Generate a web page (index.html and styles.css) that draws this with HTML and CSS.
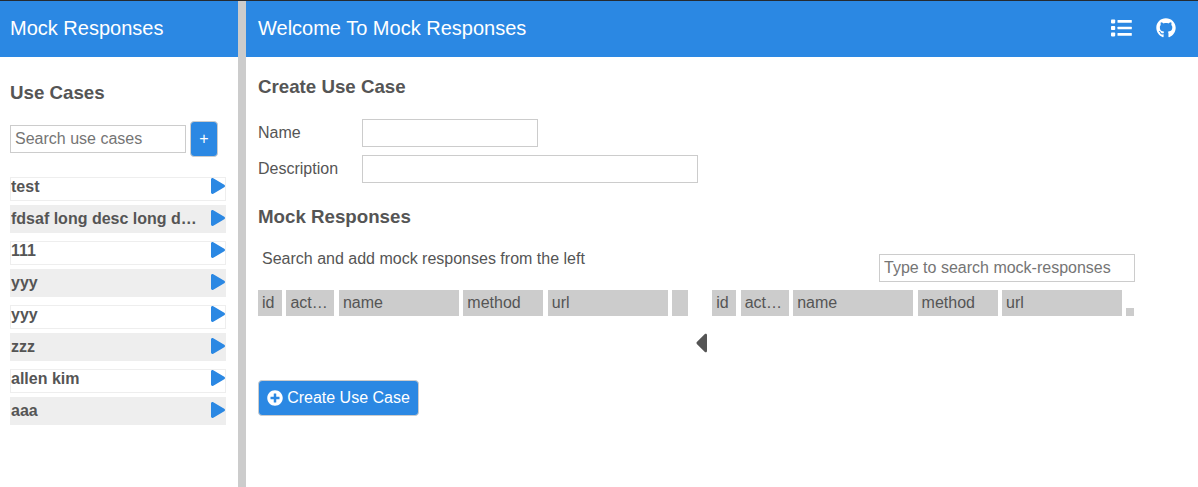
FILE: index.html
```html
<!DOCTYPE html>
<html lang="en">
<head>
<meta charset="utf-8">
<title>Mock Responses</title>
<link rel="stylesheet" href="styles.css">
</head>
<body>
<svg width="0" height="0" class="sprite">
  <symbol id="play" viewBox="0 0 448 512"><path d="M424.4 214.7L72.4 6.6C43.8-10.3 0 6.1 0 47.9V464c0 37.5 40.7 60.1 72.4 41.3l352-208c31.4-18.5 31.5-64.1 0-82.6z"/></symbol>
</svg>
<div class="app">
  <aside class="sidebar">
    <header class="bar">Mock Responses</header>
    <div class="side-body">
      <h3>Use Cases</h3>
      <div class="search">
        <input type="text" class="field" placeholder="Search use cases">
        <button class="btn add">+</button>
      </div>
      <ul class="cases">
        <li><span>test</span><svg class="play"><use href="#play"/></svg></li>
        <li><span>fdsaf long desc long d…</span><svg class="play"><use href="#play"/></svg></li>
        <li><span>111</span><svg class="play"><use href="#play"/></svg></li>
        <li><span>yyy</span><svg class="play"><use href="#play"/></svg></li>
        <li><span>yyy</span><svg class="play"><use href="#play"/></svg></li>
        <li><span>zzz</span><svg class="play"><use href="#play"/></svg></li>
        <li><span>allen kim</span><svg class="play"><use href="#play"/></svg></li>
        <li><span>aaa</span><svg class="play"><use href="#play"/></svg></li>
      </ul>
    </div>
  </aside>
  <main class="main">
    <header class="bar">
      <span>Welcome To Mock Responses</span>
      <nav class="links">
        <svg class="list-icon" viewBox="0 0 21 18"><rect x="0" y="0.4" width="4.2" height="4" rx=".8"/><rect x="0" y="7" width="4.2" height="4" rx=".8"/><rect x="0" y="13.4" width="4.2" height="4" rx=".8"/><rect x="6.5" y="1.1" width="14.3" height="2.6" rx=".5"/><rect x="6.5" y="7.7" width="14.3" height="2.6" rx=".5"/><rect x="6.5" y="14.1" width="14.3" height="2.6" rx=".5"/></svg>
        <svg class="github-icon" viewBox="0 0 496 512"><path d="M165.9 397.4c0 2-2.3 3.6-5.2 3.6-3.3.3-5.6-1.3-5.6-3.6 0-2 2.3-3.6 5.2-3.6 3-.3 5.6 1.3 5.6 3.6zm-31.1-4.5c-.7 2 1.3 4.3 4.3 4.9 2.6 1 5.6 0 6.2-2s-1.3-4.3-4.3-5.2c-2.6-.7-5.5.3-6.2 2.3zm44.2-1.7c-2.9.7-4.9 2.6-4.6 4.9.3 2 2.9 3.3 5.9 2.6 2.9-.7 4.9-2.6 4.6-4.6-.3-1.9-3-3.2-5.9-2.9zM244.8 8C106.1 8 0 113.3 0 252c0 110.9 69.8 205.8 169.5 239.2 12.8 2.3 17.3-5.6 17.3-12.1 0-6.2-.3-40.4-.3-61.4 0 0-70 15-84.7-29.8 0 0-11.4-29.1-27.8-36.6 0 0-22.9-15.7 1.6-15.4 0 0 24.9 2 38.6 25.8 21.9 38.6 58.6 27.5 72.9 20.9 2.3-16 8.8-27.1 16-33.7-55.9-6.2-112.3-14.3-112.3-110.5 0-27.5 7.6-41.3 23.6-58.9-2.6-6.5-11.1-33.3 2.6-67.9 20.9-6.5 69 27 69 27 20-5.6 41.5-8.5 62.8-8.5s42.8 2.9 62.8 8.5c0 0 48.1-33.6 69-27 13.7 34.7 5.2 61.4 2.6 67.9 16 17.7 25.8 31.5 25.8 58.9 0 96.5-58.9 104.2-114.8 110.5 9.2 7.9 17 22.9 17 46.4 0 33.7-.3 75.4-.3 83.6 0 6.5 4.6 14.4 17.3 12.1C428.2 457.8 496 362.9 496 252 496 113.3 383.5 8 244.8 8z"/></svg>
      </nav>
    </header>
    <div class="content">
      <h3>Create Use Case</h3>
      <label class="form-row"><span>Name</span><input type="text" class="field"></label>
      <label class="form-row"><span>Description</span><input type="text" class="field wide"></label>
      <h3 class="second">Mock Responses</h3>
      <div class="lists">
        <section class="selected">
          <p class="hint">Search and add mock responses from the left</p>
          <div class="cols"><span class="id">id</span><span class="active">act…</span><span class="name">name</span><span class="method">method</span><span class="url">url</span><span class="remove"></span></div>
        </section>
        <svg class="caret" viewBox="0 0 192 512"><path d="M192 127.338v257.324c0 17.818-21.543 26.741-34.142 14.142L29.196 270.142c-7.81-7.81-7.81-20.474 0-28.284l128.662-128.662c12.599-12.6 34.142-3.676 34.142 14.142z"/></svg>
        <section class="available">
          <input type="text" class="field find" placeholder="Type to search mock-responses">
          <div class="cols"><span class="id">id</span><span class="active">act…</span><span class="name">name</span><span class="method">method</span><span class="url">url</span><span class="pick"></span></div>
        </section>
      </div>
      <button class="btn create"><svg viewBox="0 0 512 512"><path d="M256 8C119 8 8 119 8 256s111 248 248 248 248-111 248-248S393 8 256 8zm144 276c0 6.600-5.400 12-12 12h-92v92c0 6.600-5.400 12-12 12h-56c-6.600 0-12-5.400-12-12v-92h-92c-6.600 0-12-5.400-12-12v-56c0-6.600 5.400-12 12-12h92v-92c0-6.600 5.400-12 12-12h56c6.600 0 12 5.400 12 12v92h92c6.600 0 12 5.400 12 12v56z"/></svg>Create Use Case</button>
    </div>
  </main>
</div>
</body>
</html>
```
FILE: styles.css
```css
* { box-sizing: border-box; }
body {
  margin: 0;
  font: 16px/20px Helvetica, "Liberation Sans", Arial, sans-serif;
  color: #555;
  background: #fff;
}
.sprite { display: none; }
.app { display: flex; height: 487px; border-top: 1px solid #252a30; overflow: hidden; }
.sidebar { width: 246px; border-right: 8px solid #ccc; }
.main { flex: 1; }
.bar {
  display: flex;
  align-items: center;
  justify-content: space-between;
  height: 56px;
  padding: 0 22.5px 2px 10px;
  background: #2b88e3;
  color: #fff;
  font-size: 20px;
}
.main .bar { padding-left: 12px; }
.links { display: flex; align-items: center; gap: 23.5px; }
.links svg { fill: #fff; }
.list-icon { width: 21px; height: 18px; }
.github-icon { width: 20px; height: 20px; }
h3 { margin: 0; font-size: 18.72px; line-height: 22px; }
.side-body { padding: 25px 12px 0 10px; }
.search { display: flex; align-items: center; gap: 4px; margin: 17px 0 20px; }
.field {
  width: 176px;
  height: 28px;
  padding: 0 4px;
  border: 1px solid #ccc;
  font: inherit;
  color: #555;
}
.field::placeholder { color: #757575; }
.btn {
  display: flex;
  align-items: center;
  justify-content: center;
  height: 36px;
  padding: 0;
  border: 1px solid #ccc;
  border-radius: 4px;
  background: #2b88e3;
  color: #fff;
  font: inherit;
}
.add { width: 28px; }
.cases { margin: 0; padding: 0; list-style: none; font-weight: bold; }
.cases li {
  display: flex;
  align-items: flex-start;
  justify-content: space-between;
  height: 24px;
  margin-bottom: 4px;
  border: 1px solid #eee;
}
.cases li:nth-child(even) { height: 28px; margin-bottom: 8px; padding-top: 4px; background: #eee; }
.cases span { width: 190px; overflow: hidden; text-overflow: ellipsis; white-space: nowrap; line-height: 18px; }
.play { width: 14px; height: 16px; fill: #2b88e3; }
.content { padding: 19px 12px 0; }
.form-row { display: flex; height: 28px; margin-bottom: 8px; }
.content h3 { margin-bottom: 21px; }
.content h3.second { margin: 23px 0 20px; }
.form-row span { width: 104px; line-height: 27px; }
.wide { width: 336px; }
.lists { display: flex; height: 132px; }
.selected { width: 430px; }
.available { width: 423px; display: flex; flex-direction: column; }
.hint { height: 42px; margin: 0; padding: 1px 4px 0; }
.find { width: 256px; margin: 6px 0 8px; align-self: flex-end; }
.caret { width: 12px; height: 32px; margin: 79px 5.3px 0 6.7px; fill: #555; }
.available .cols { margin-left: .3px; }
.cols { display: flex; align-items: flex-end; gap: 4.45px; }
.cols span {
  flex: none;
  height: 26px;
  padding: 0 4px;
  background: #ccc;
  line-height: 26px;
  overflow: hidden;
  text-overflow: ellipsis;
  white-space: nowrap;
}
.cols .id { width: 24px; }
.cols .active { width: 48px; }
.cols .name, .cols .url { width: 120px; }
.cols .method { width: 80px; }
.cols .remove { width: 16px; }
.cols .pick { width: 8px; height: 8px; }
.create { width: 161px; gap: 4px; }
.create svg { width: 16px; height: 16px; fill: #fff; }
```
